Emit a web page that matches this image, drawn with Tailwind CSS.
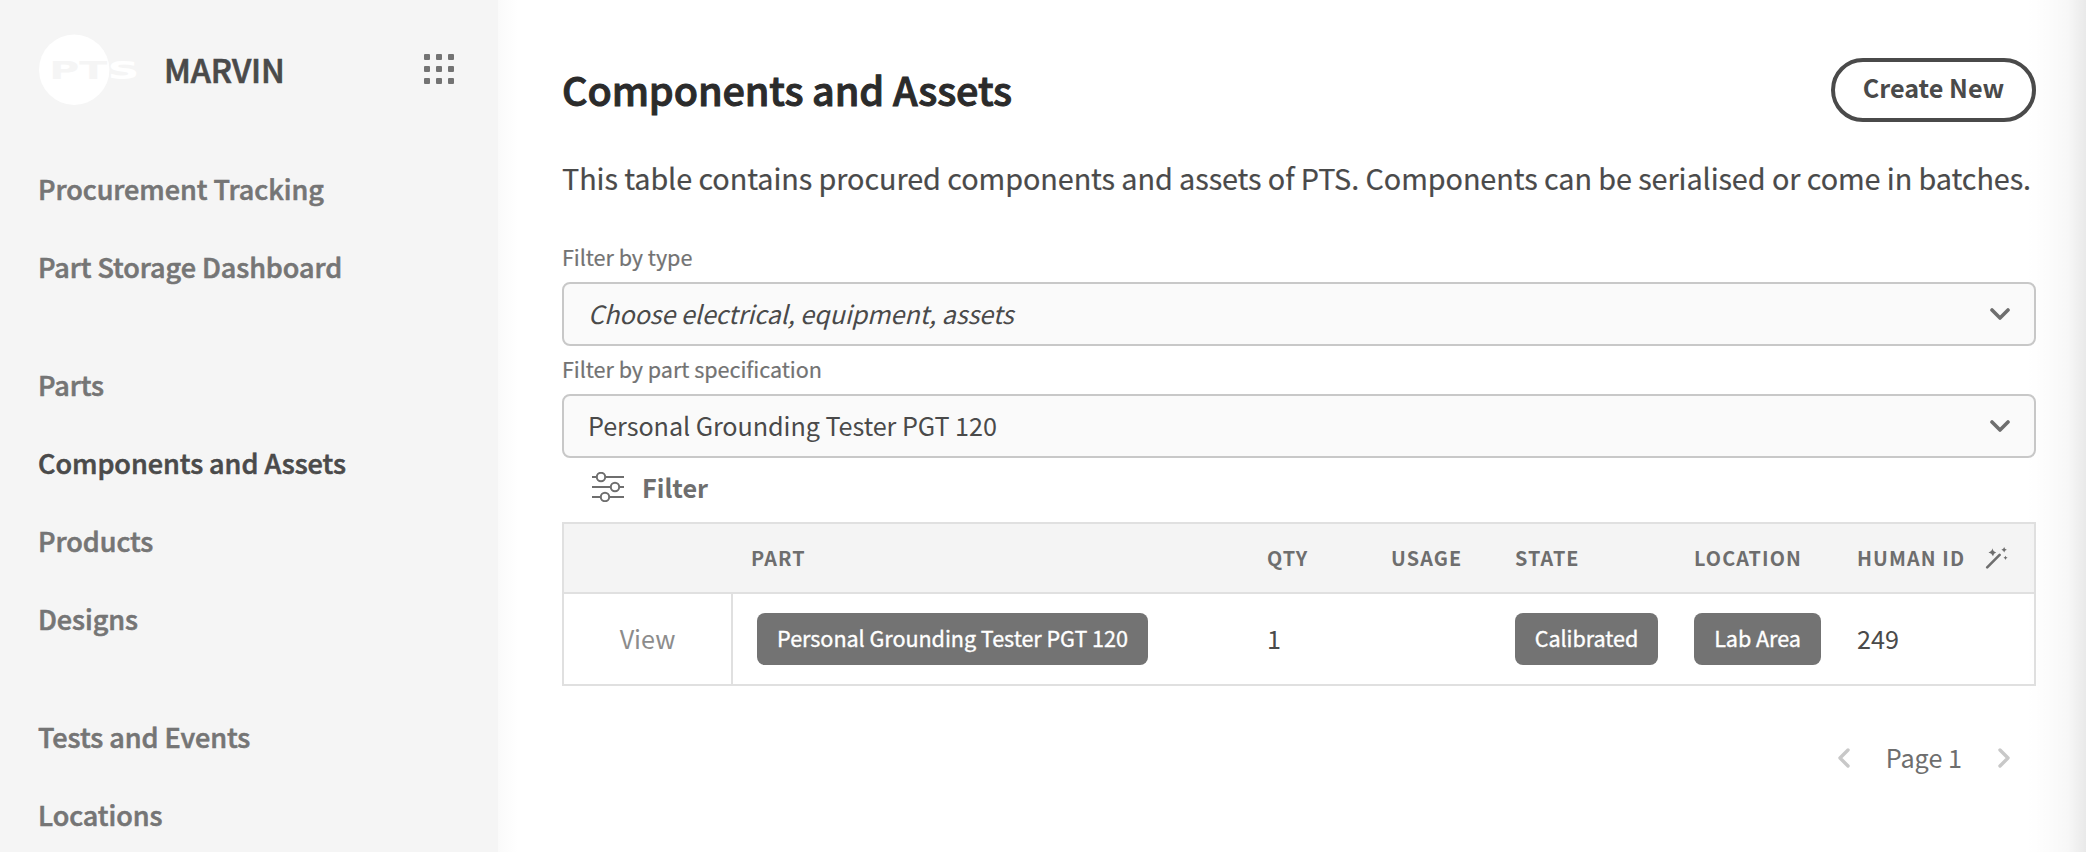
<!DOCTYPE html>
<html lang="en">
<head>
<meta charset="utf-8">
<title>Components and Assets</title>
<script src="https://cdn.jsdelivr.net/npm/@tailwindcss/browser@4"></script>
</head>
<body class="w-[2086px] h-[852px] overflow-hidden bg-white flex relative font-['Noto_Sans_CJK_SC',sans-serif] text-[#4a4a4a] text-[25.2px]">

<!-- Sidebar -->
<aside class="w-[498px] h-[852px] shrink-0 overflow-hidden bg-[#f5f5f5] pl-[38px] pr-[44px] pt-[34px]">
  <div class="flex items-center h-[71px]">
    <svg class="shrink-0 w-[102px] h-[71px]" viewBox="0 0 102 71">
      <circle cx="36.2" cy="35.7" r="35.2" fill="#fff"/>
      <g font-family="DejaVu Sans" font-weight="700" font-size="24.6">
        <text x="11.2" y="45" fill="#f5f5f5" textLength="58" lengthAdjust="spacingAndGlyphs">PT</text>
        <text x="69.500" y="45" fill="#fff" textLength="32" lengthAdjust="spacingAndGlyphs">S</text>
      </g>
    </svg>
    <div class="ml-[24px] pb-[2px] text-[32.4px] leading-[40px] font-medium tracking-[-0.1px] [-webkit-text-stroke:0.7px_#4a4a4a]">MARVIN</div>
    <div class="ml-auto mb-[2px] grid grid-cols-3 gap-[6px] w-[30px]">
      <i class="size-[6px] rounded-[1px] bg-[#737373]"></i><i class="size-[6px] rounded-[1px] bg-[#737373]"></i><i class="size-[6px] rounded-[1px] bg-[#737373]"></i>
      <i class="size-[6px] rounded-[1px] bg-[#737373]"></i><i class="size-[6px] rounded-[1px] bg-[#737373]"></i><i class="size-[6px] rounded-[1px] bg-[#737373]"></i>
      <i class="size-[6px] rounded-[1px] bg-[#737373]"></i><i class="size-[6px] rounded-[1px] bg-[#737373]"></i><i class="size-[6px] rounded-[1px] bg-[#737373]"></i>
    </div>
  </div>
  <nav class="mt-[45px] flex flex-col gap-10 text-[27px] leading-[78px] font-medium tracking-[-0.04px] text-[#757575] [-webkit-text-stroke:0.6px]">
    <div><a class="block">Procurement Tracking</a><a class="block">Part Storage Dashboard</a></div>
    <div><a class="block">Parts</a><a class="block text-[#4a4a4a]">Components and Assets</a><a class="block">Products</a><a class="block">Designs</a></div>
    <div><a class="block">Tests and Events</a><a class="block">Locations</a></div>
  </nav>
</aside>

<!-- Main -->
<main class="flex-1 pl-16 pr-[50px] pt-[58px]">
  <header class="flex items-center justify-between h-16">
    <h1 class="text-[39.6px] leading-[48px] pb-[3px] font-medium tracking-[-0.12px] text-[#2b2b2b] [-webkit-text-stroke:1px]">Components and Assets</h1>
    <button class="w-[205px] h-16 rounded-full border-4 border-[#4a4a4a] font-bold leading-[36px] pb-[6px]">Create New</button>
  </header>
  <p class="mt-[35px] h-[41px] leading-[41px] text-[28.8px] tracking-[-0.08px] whitespace-nowrap [-webkit-text-stroke:0.2px]">This table contains procured components and assets of PTS. Components can be serialised or come in batches.</p>

  <label class="block mt-[45px] h-7 leading-7 text-[21.6px] tracking-[-0.05px] text-[#737373] [-webkit-text-stroke:0.2px]">Filter by type</label>
  <div class="mt-[11px] h-16 flex items-center justify-between border-2 border-[#c8c8c8] rounded-lg bg-[#fafafa] pl-[24px] pr-[24px]">
    <span class="italic leading-[36px] pb-[2px] tracking-[-0.08px]">Choose electrical, equipment, assets</span>
    <svg class="w-[20px] h-[12px]" viewBox="0 0 20 12" fill="none" stroke="#6e6e6e" stroke-width="3.6" stroke-linecap="round" stroke-linejoin="round"><path d="M2 2l8 8 8-8"/></svg>
  </div>

  <label class="block mt-[9px] h-7 leading-7 text-[21.6px] tracking-[-0.05px] text-[#737373] [-webkit-text-stroke:0.2px]">Filter by part specification</label>
  <div class="mt-[11px] h-16 flex items-center justify-between border-2 border-[#c8c8c8] rounded-lg bg-[#fafafa] pl-6 pr-[24px]">
    <span class="leading-[36px] pb-[2px] tracking-[-0.07px]">Personal Grounding Tester PGT 120</span>
    <svg class="w-[20px] h-[12px]" viewBox="0 0 20 12" fill="none" stroke="#6e6e6e" stroke-width="3.6" stroke-linecap="round" stroke-linejoin="round"><path d="M2 2l8 8 8-8"/></svg>
  </div>

  <div class="h-[58px] pl-[30px] flex items-center gap-[16px] text-[#6e6e6e]">
    <svg class="w-8 h-[30px]" viewBox="0 0 32 30" fill="none" stroke="currentColor" stroke-width="2"><path d="M0 5h4.8M13.200 5H32M0 15h18.800M27.200 15H32M0 25h8.800M17.200 25H32"/><circle cx="9" cy="5" r="4.200"/><circle cx="23" cy="15" r="4.200"/><circle cx="13" cy="25" r="4.200"/></svg>
    <span class="font-bold leading-[36px] pl-[2px]">Filter</span>
  </div>

  <!-- Table -->
  <section class="mt-[6px] w-[1474px] border-2 border-[#e0e0e0]">
    <div class="grid grid-cols-[187px_516px_124px_124px_179px_163px_1fr] h-[70px] items-center border-b-2 border-[#e0e0e0] bg-[#f4f4f4] text-[19.8px] leading-[28px] font-bold tracking-[1.12px] text-[#6e6e6e]">
      <span></span><span>PART</span><span>QTY</span><span>USAGE</span><span>STATE</span><span>LOCATION</span>
      <span class="flex items-center">HUMAN ID
        <svg class="ml-[20px] mb-[2px] w-6 h-6" viewBox="0 0 24 24" fill="#6e6e6e"><path d="M2.200 22.300L14.600 9.900" stroke="#6e6e6e" stroke-width="2.600" stroke-linecap="round"/><path d="M7.500 3.200Q7.900 6.500 11.200 7.400Q8.500 8 8 11.200Q6.900 8.200 3.500 7.400Q6.800 6.500 7.500 3.200ZM19.200 2Q19.400 4.300 21.800 4.700Q19.500 5.100 19.200 7.600Q18.600 5.100 16.400 4.700Q18.700 4.300 19.200 2ZM20.500 10.800Q20.700 12.500 22.600 12.800Q20.700 13.100 20.500 15Q20.200 13.100 18.500 12.800Q20.200 12.500 20.500 10.800Z"/></svg>
      </span>
    </div>
    <div class="grid grid-cols-[169px_18px_516px_124px_124px_179px_163px_1fr] h-[90px] items-center leading-[36px]">
      <span class="h-[90px] border-r-2 border-[#e0e0e0] flex items-center justify-center pb-[2px] text-[#8c8c8c]">View</span>
      <span></span>
      <span class="pl-[6px]"><span class="inline-flex w-[391px] h-[52px] items-center justify-center rounded-lg bg-[#737373] pb-[3px] text-[21.6px] text-white tracking-[-0.05px] [-webkit-text-stroke:0.35px] align-middle">Personal Grounding Tester PGT 120</span></span>
      <span class="pb-[2px]">1</span><span></span>
      <span><span class="inline-flex w-[143px] h-[52px] items-center justify-center rounded-lg bg-[#737373] pb-[3px] text-[21.6px] text-white tracking-[-0.05px] [-webkit-text-stroke:0.35px] align-middle">Calibrated</span></span>
      <span><span class="inline-flex w-[127px] h-[52px] items-center justify-center rounded-lg bg-[#737373] pb-[3px] text-[21.6px] text-white tracking-[-0.05px] [-webkit-text-stroke:0.35px] align-middle">Lab Area</span></span>
      <span class="pb-[2px]">249</span>
    </div>
  </section>

  <footer class="mt-[52px] h-10 flex items-center justify-end pr-[26px] text-[#6e6e6e]">
    <svg class="w-3 h-5" viewBox="0 0 12 20" fill="none" stroke="#c8c8c8" stroke-width="3.400" stroke-linecap="round" stroke-linejoin="round"><path d="M10 2l-8 8 8 8"/></svg>
    <span class="ml-[36px] mr-[36px] leading-[36px] pb-[2px]">Page 1</span>
    <svg class="w-3 h-5" viewBox="0 0 12 20" fill="none" stroke="#c8c8c8" stroke-width="3.400" stroke-linecap="round" stroke-linejoin="round"><path d="M2 2l8 8-8 8"/></svg>
  </footer>
</main>

<!-- Edge shadows -->
<div class="absolute left-[498px] top-0 w-[20px] h-[852px] bg-linear-to-r from-[#fafafa] to-white"></div>
<div class="absolute right-0 top-0 w-[60px] h-[852px] bg-[linear-gradient(to_right,rgba(0,0,0,0)_0%,rgba(0,0,0,0.01)_35%,rgba(0,0,0,0.03)_70%,rgba(0,0,0,0.085)_100%)]"></div>
</body>
</html>
